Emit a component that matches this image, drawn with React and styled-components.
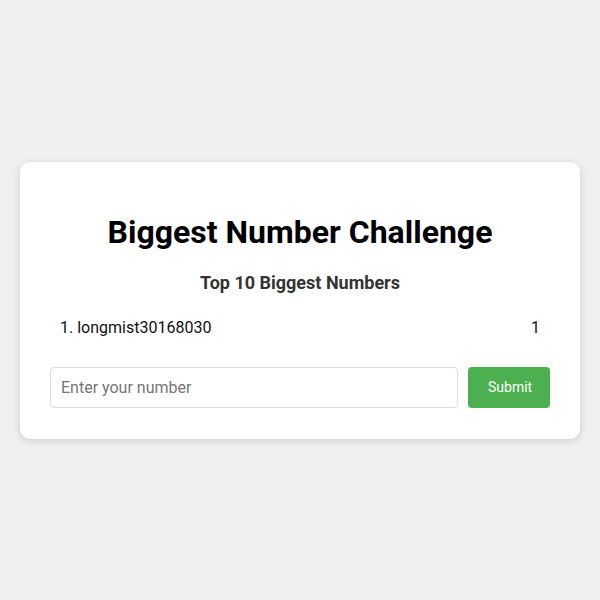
import React, { useState } from "react";
import styled, { createGlobalStyle } from "styled-components";

const GlobalStyle = createGlobalStyle`
  * { box-sizing: border-box; }
  body {
    margin: 0;
    background: #f0f0f0;
    font-family: Roboto, "Liberation Sans", Arial, sans-serif;
  }
`;

const Page = styled.div`
  min-height: 100vh;
  display: flex;
  align-items: center;
  justify-content: center;
  padding: 0 20px;
`;

const Card = styled.div`
  width: 100%;
  max-width: 560px;
  background: #fff;
  border-radius: 10px;
  box-shadow: 0 2px 8px rgba(0, 0, 0, 0.15);
  padding: 31px 30px 31px;
`;

const Title = styled.h1`
  font-size: 32px;
  font-weight: 700;
  color: #000;
  text-align: center;
  margin: 21px 0;
  line-height: 37px;
`;

const Subtitle = styled.h3`
  font-size: 18px;
  font-weight: 700;
  color: #333;
  text-align: center;
  margin: 21px 0 19px;
  line-height: 22px;
`;

const List = styled.ul`
  list-style: none;
  padding: 0;
  margin: 0 0 25px;
`;

const Row = styled.li`
  display: flex;
  justify-content: space-between;
  padding: 5px 10px;
  font-size: 16px;
  line-height: 19px;
  color: #111;
`;

const Form = styled.form`
  display: flex;
  gap: 10px;
`;

const Input = styled.input`
  flex: 1;
  padding: 10px;
  font-size: 16px;
  line-height: 19px;
  font-family: inherit;
  border: 1px solid #ddd;
  border-radius: 4px;
  outline: none;
  &::placeholder { color: #757575; }
`;

const Button = styled.button`
  padding: 10px 20px;
  font-size: 14px;
  font-family: inherit;
  background: #4caf50;
  color: #fff;
  border: none;
  border-radius: 4px;
  width: 82px;
  cursor: pointer;
`;

const scores = [{ name: "longmist30168030", value: 1 }];

export default function App() {
  const [value, setValue] = useState("");
  return (
    <>
      <GlobalStyle />
      <Page>
        <Card>
          <Title>Biggest Number Challenge</Title>
          <Subtitle>Top 10 Biggest Numbers</Subtitle>
          <List>
            {scores.map((s, i) => (
              <Row key={s.name}>
                <span>{i + 1}. {s.name}</span>
                <span>{s.value}</span>
              </Row>
            ))}
          </List>
          <Form onSubmit={(e) => e.preventDefault()}>
            <Input
              placeholder="Enter your number"
              value={value}
              onChange={(e) => setValue(e.target.value)}
            />
            <Button type="submit">Submit</Button>
          </Form>
        </Card>
      </Page>
    </>
  );
}
